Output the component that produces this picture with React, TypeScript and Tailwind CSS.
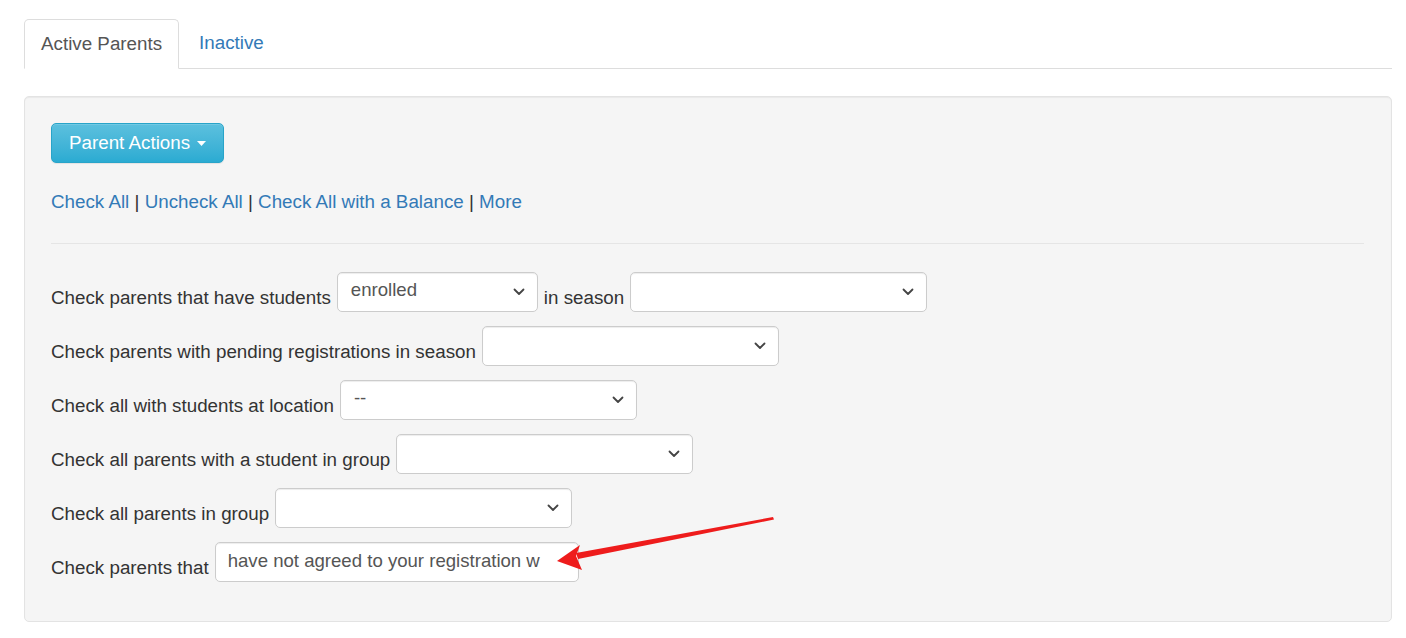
import React from "react";

const Chevron = () => (
  <svg width="12" height="8" viewBox="0 0 12 8" className="shrink-0">
    <path d="M1.5 1.5 L6 6 L10.5 1.5" fill="none" stroke="#444" strokeWidth="1.8" strokeLinecap="round" strokeLinejoin="round" />
  </svg>
);

const FakeSelect = ({ width, value = "" }: { width: string; value?: string }) => (
  <div
    className={`${width} h-[40px] flex items-center justify-between bg-white border border-[#ccc] rounded-[5px] pl-[13px] pr-[12px] shadow-[inset_0_1px_1px_rgba(0,0,0,0.075)] text-[18.6px] text-[#555]`}
  >
    <span className="-mt-[4px] whitespace-nowrap overflow-hidden">{value}</span>
    <Chevron />
  </div>
);

const Row = ({ children }: { children: React.ReactNode }) => (
  <div className="flex items-start gap-[6px] h-[54px]">{children}</div>
);

const Label = ({ children }: { children: React.ReactNode }) => (
  <span className="pt-[13px] leading-[25px] whitespace-nowrap">{children}</span>
);

export default function App() {
  return (
    <div
      className="relative w-[1406px] h-[638px] bg-white text-[#333] text-[18.8px] overflow-hidden"
      style={{ fontFamily: '"Liberation Sans", Arial, sans-serif' }}
    >
      <div className="pl-[24px] pr-[14px] pt-[19px]">
        {/* tabs */}
        <div className="flex border-b border-[#ddd] h-[50px]">
          <div className="h-[50px] -mb-px px-[16px] flex items-center bg-white border border-[#ddd] border-b-white rounded-t-[5px] text-[#555]">
            Active Parents
          </div>
          <div className="px-[20px] flex items-center text-[#337ab7]">Inactive</div>
        </div>

        {/* well */}
        <div className="mt-[27px] h-[526px] bg-[#f5f5f5] border border-[#e3e3e3] rounded-[5px] shadow-[inset_0_1px_1px_rgba(0,0,0,0.05)] pl-[26px] pr-[27px] pt-[26px]">
          <button className="h-[40px] px-[17px] flex items-center gap-[7px] text-white rounded-[5px] border border-[#28a4c9] bg-gradient-to-b from-[#5bc0de] to-[#2aabd2] shadow-[inset_0_1px_0_rgba(255,255,255,0.15),0_1px_1px_rgba(0,0,0,0.075)]">
            Parent Actions
            <svg width="9" height="5" viewBox="0 0 9 5">
              <path d="M0 0 L9 0 L4.5 5 Z" fill="#fff" />
            </svg>
          </button>

          <div className="mt-[26px] leading-[25px]">
            <span className="text-[#337ab7]">Check All</span> |{" "}
            <span className="text-[#337ab7]">Uncheck All</span> |{" "}
            <span className="text-[#337ab7]">Check All with a Balance</span> |{" "}
            <span className="text-[#337ab7]">More</span>
          </div>

          <hr className="mt-[29px] border-t border-[#e5e5e5]" />

          <div className="mt-[28px]">
            <Row>
              <Label>Check parents that have students</Label>
              <FakeSelect width="w-[201px]" value="enrolled" />
              <Label>in season</Label>
              <FakeSelect width="w-[297px]" />
            </Row>
            <Row>
              <Label>Check parents with pending registrations in season</Label>
              <FakeSelect width="w-[297px]" />
            </Row>
            <Row>
              <Label>Check all with students at location</Label>
              <FakeSelect width="w-[297px]" value="--" />
            </Row>
            <Row>
              <Label>Check all parents with a student in group</Label>
              <FakeSelect width="w-[297px]" />
            </Row>
            <Row>
              <Label>Check all parents in group</Label>
              <FakeSelect width="w-[297px]" />
            </Row>
            <Row>
              <Label>Check parents that</Label>
              <div className="w-[364px] h-[40px] flex items-center bg-white border border-[#ccc] rounded-[5px] pl-[12px] shadow-[inset_0_1px_1px_rgba(0,0,0,0.075)] text-[18.6px] text-[#555]">
                <span className="-mt-[2px] whitespace-nowrap">have not agreed to your registration w</span>
              </div>
            </Row>
          </div>
        </div>
      </div>

      {/* red annotation arrow */}
      <svg className="absolute left-0 top-0 pointer-events-none" width="1406" height="638">
        <polygon points="773,517 774,519.5 578,559 576,553" fill="#ee1c1c" />
        <polygon points="557,561 580,545 576,556 582,570" fill="#ee1c1c" />
      </svg>
    </div>
  );
}
